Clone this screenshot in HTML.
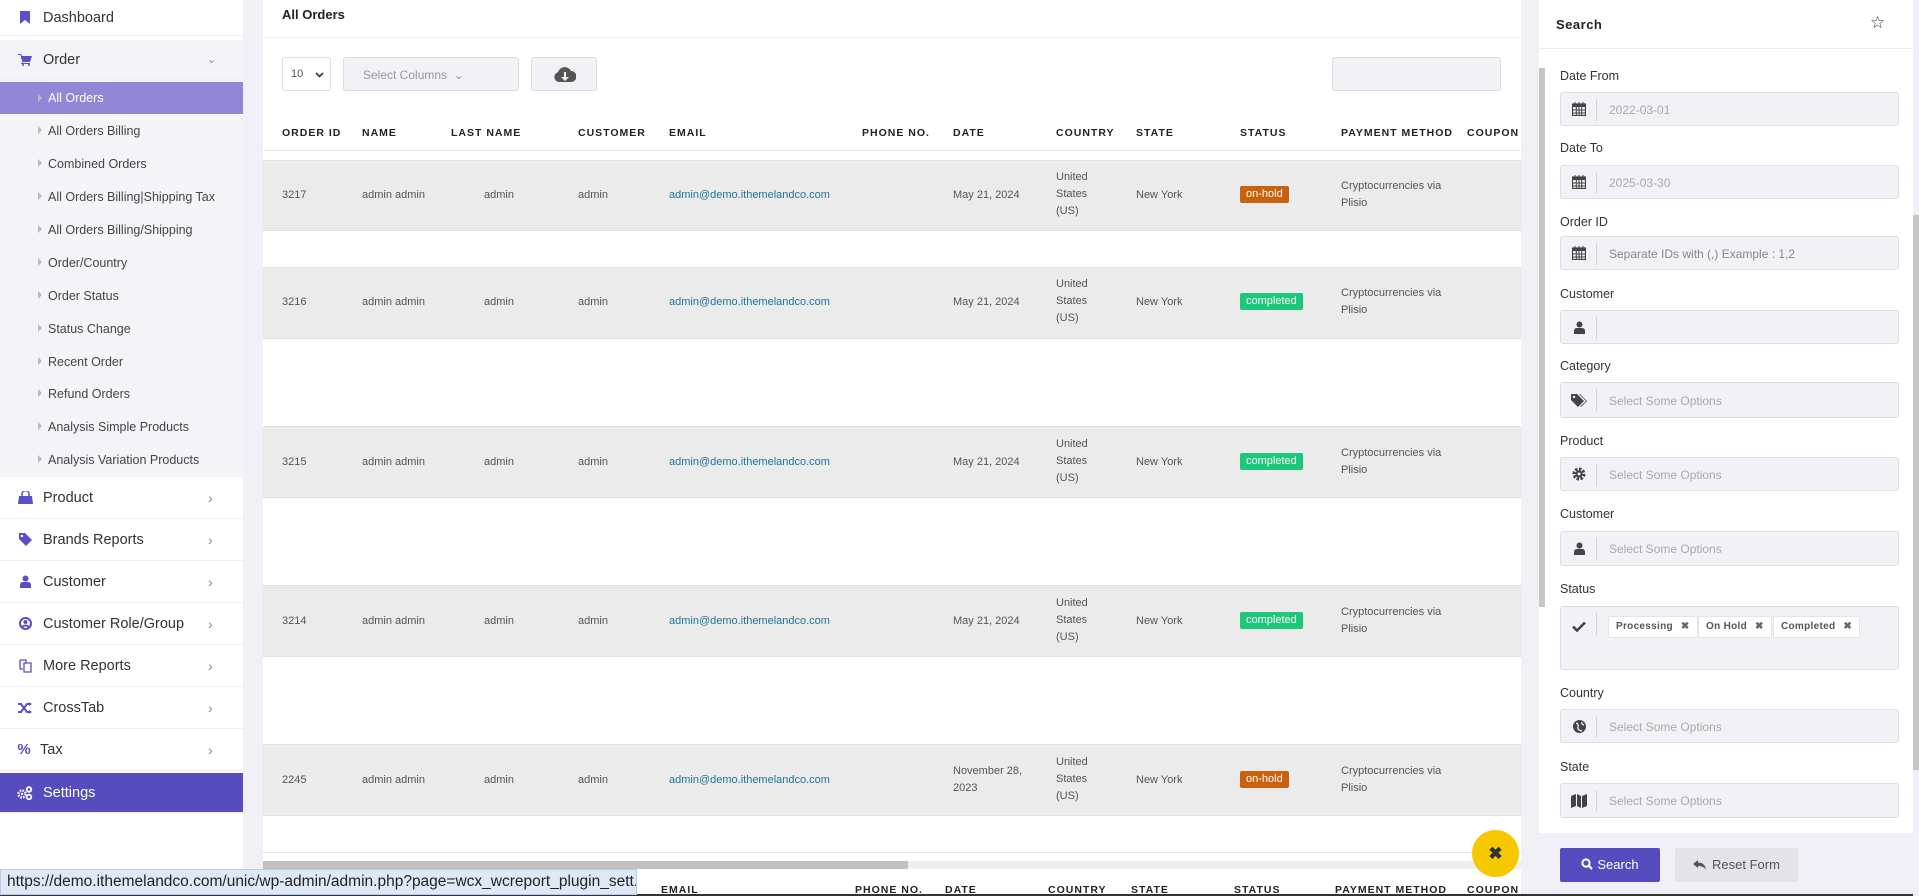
<!DOCTYPE html>
<html><head><meta charset="utf-8">
<style>
*{box-sizing:border-box;margin:0;padding:0}
body{width:1919px;height:896px;overflow:hidden;background:#f0f0f6;font-family:"Liberation Sans",Arial,sans-serif;position:relative;color:#333}
.a{position:absolute}
.side{left:0;top:0;width:243px;height:896px;background:#fff}
.mi{position:absolute;left:0;width:243px;height:42px;background:#fff;border-bottom:1px solid #f0f0f4;font-size:14.5px;color:#333;display:flex;align-items:center}
.mi .ic{width:16px;height:14px;margin-left:17px;margin-right:10px;color:#5a4fc4;font-size:14px;display:flex;align-items:center;justify-content:center}
.mi .ch{position:absolute;left:208px;color:#888;font-size:14px}
.sub{position:absolute;left:0;width:243px;height:33px;font-size:12.5px;color:#444;display:flex;align-items:center;padding-left:48px}
.sub:before{content:"";position:absolute;left:38px;top:12px;border-left:4px solid #bbb;border-top:4px solid transparent;border-bottom:4px solid transparent}
.main{left:263px;top:0;width:1258px;height:869px;background:#fff}
.th{position:absolute;font-size:10.5px;font-weight:bold;letter-spacing:1px;color:#222}
.row{position:absolute;left:263px;width:1258px;background:#ebebeb;border-top:1px solid #e2e2e2;border-bottom:1px solid #e2e2e2}
.td{position:absolute;font-size:11px;color:#555;line-height:17px}
.em{color:#21759b}
.badge{position:absolute;font-size:11px;color:#fff;border-radius:2px;padding:1px 6px;line-height:15px}
.lbl{position:absolute;left:1560px;font-size:12.5px;color:#333}
.inp{position:absolute;left:1560px;width:339px;height:34px;background:#f1f1f6;border:1px solid #dedee6;border-radius:3px}
.inp .ic{position:absolute;left:0;top:0;width:36px;height:100%;display:flex;align-items:center;justify-content:center;color:#444;font-size:14px}
.inp .ic:after{content:"";position:absolute;right:0;top:6px;height:22px;border-right:1px solid #d4d4dc}
.inp .ph{position:absolute;left:48px;top:10px;font-size:12px;color:#aaa}
.tag{position:absolute;top:9px;height:22px;background:#fff;border:1px solid #e4e4e8;border-radius:2px;font-size:10px;font-weight:bold;color:#555;padding:4px 7px;letter-spacing:.3px}
.tag b{margin-left:8px;color:#666}
</style></head><body>
<svg width="0" height="0" style="position:absolute"><defs>
<symbol id="cal" viewBox="0 0 14 14"><rect x="0.5" y="2" width="13" height="11.5" fill="none" stroke="#444" stroke-width="1.2"/><rect x="0.5" y="2" width="13" height="3" fill="#444"/><path d="M3 0v3M7 0v3M11 0v3M0 8h14M0 11h14M4.3 5v9M7 5v9M9.7 5v9" stroke="#444" stroke-width="1"/></symbol>
</defs></svg>

<div class="a side"></div>
<div class="mi" style="top:0;height:36px"><span class="ic"><svg width="10" height="13" viewBox="0 0 10 13"><path d="M0 0h10v13L5 9 0 13z" fill="#5a4fc4"/></svg></span>Dashboard</div>
<div class="mi" style="top:40px;height:40px;background:#f4f4f8"><span class="ic"><svg width="14" height="12" viewBox="0 0 14 12"><path d="M0 0h3l1 2h10l-2 6H5l-.5 1H12v1H3l1.3-2.5L2.3 1H0z" fill="#5a4fc4"/><circle cx="5" cy="11" r="1" fill="#5a4fc4"/><circle cx="11" cy="11" r="1" fill="#5a4fc4"/></svg></span>Order<span class="ch" style="left:207px;font-size:11px">&#8964;</span></div>
<div class="a" style="left:0;top:80px;width:243px;height:397px;background:#f4f4f8"></div>
<div class="sub" style="top:82px;height:32px;background:#9088d6;color:#fff">All Orders</div>
<div class="sub" style="top:114px">All Orders Billing</div>
<div class="sub" style="top:147px">Combined Orders</div>
<div class="sub" style="top:180px">All Orders Billing|Shipping Tax</div>
<div class="sub" style="top:213px">All Orders Billing/Shipping</div>
<div class="sub" style="top:246px">Order/Country</div>
<div class="sub" style="top:279px">Order Status</div>
<div class="sub" style="top:312px">Status Change</div>
<div class="sub" style="top:345px">Recent Order</div>
<div class="sub" style="top:377px">Refund Orders</div>
<div class="sub" style="top:410px">Analysis Simple Products</div>
<div class="sub" style="top:443px">Analysis Variation Products</div>
<div class="mi" style="top:477px"><span class="ic"><svg width="15" height="13" viewBox="0 0 15 13"><path d="M4 5V3a3.5 3.5 0 0 1 7 0v2" stroke="#5a4fc4" stroke-width="1.5" fill="none"/><path d="M1 5h13l1 8H0z" fill="#5a4fc4"/></svg></span>Product<span class="ch">&#8250;</span></div>
<div class="mi" style="top:519px"><span class="ic"><svg width="13" height="13" viewBox="0 0 13 13"><path d="M0 0h6l7 7-6 6-7-7z" fill="#5a4fc4"/><circle cx="3" cy="3" r="1.2" fill="#fff"/></svg></span>Brands Reports<span class="ch">&#8250;</span></div>
<div class="mi" style="top:561px"><span class="ic"><svg width="11" height="13" viewBox="0 0 11 13"><circle cx="5.5" cy="3.5" r="3" fill="#5a4fc4"/><path d="M0 13v-3q0-3 3-3h5q3 0 3 3v3z" fill="#5a4fc4"/></svg></span>Customer<span class="ch">&#8250;</span></div>
<div class="mi" style="top:603px"><span class="ic"><svg width="13" height="13" viewBox="0 0 13 13"><circle cx="6.5" cy="6.5" r="5.5" stroke="#5a4fc4" stroke-width="2" fill="none"/><circle cx="6.5" cy="5" r="2" fill="#5a4fc4"/><path d="M3 10q3.5-3 7 0" stroke="#5a4fc4" stroke-width="2" fill="none"/></svg></span>Customer Role/Group<span class="ch">&#8250;</span></div>
<div class="mi" style="top:645px"><span class="ic"><svg width="13" height="14" viewBox="0 0 13 14"><path d="M1 1h6v3M1 1v9h3M5 4h7v9H5z" stroke="#5a4fc4" stroke-width="1.3" fill="none"/></svg></span>More Reports<span class="ch">&#8250;</span></div>
<div class="mi" style="top:687px"><span class="ic"><svg width="14" height="12" viewBox="0 0 14 12"><path d="M0 2h3l6 8h3M0 10h3l6-8h3" stroke="#5a4fc4" stroke-width="2" fill="none"/><path d="M11 0l3 2-3 2zM11 8l3 2-3 2z" fill="#5a4fc4"/></svg></span>CrossTab<span class="ch">&#8250;</span></div>
<div class="mi" style="top:729px"><span class="ic" style="font-weight:bold;font-size:15px;margin-left:16px;margin-right:8px">%</span>Tax<span class="ch">&#8250;</span></div>
<div class="mi" style="top:773px;height:40px;background:#564bbf;color:#fff"><span class="ic"><svg width="16" height="14" viewBox="0 0 16 14"><circle cx="5" cy="8" r="3.5" stroke="#fff" stroke-width="2.4" stroke-dasharray="1.6 1.2" fill="none"/><circle cx="5" cy="8" r="1.2" fill="#fff"/><circle cx="12" cy="3.5" r="2.3" stroke="#fff" stroke-width="1.8" fill="none"/><circle cx="12" cy="11" r="2.3" stroke="#fff" stroke-width="1.8" fill="none"/></svg></span>Settings</div>

<div class="a main"></div>
<div class="a" style="left:282px;top:7px;font-size:13px;font-weight:bold;color:#222">All Orders</div>
<div class="a" style="left:263px;top:37px;width:1258px;border-top:1px solid #efeff3"></div>
<div class="a" style="left:282px;top:57px;width:49px;height:34px;border:1px solid #ddd;border-radius:3px;font-size:11px;color:#555;padding:10px 8px;white-space:nowrap">10<svg style="position:absolute;left:32px;top:14px" width="9" height="6" viewBox="0 0 9 6"><path d="M1 1l3.5 3.5L8 1" stroke="#333" stroke-width="1.6" fill="none"/></svg></div>
<div class="a" style="left:343px;top:57px;width:176px;height:34px;background:#f1f1f6;border:1px solid #ddd;border-radius:3px;font-size:12px;color:#999;padding:10px 19px">Select Columns &nbsp;&#8964;</div>
<div class="a" style="left:531px;top:57px;width:66px;height:34px;background:#f1f1f6;border:1px solid #ddd;border-radius:3px"><svg style="position:absolute;left:22px;top:9px" width="22" height="16" viewBox="0 0 22 16"><path d="M5 15a5 5 0 0 1-1-9.8A7 7 0 0 1 17 4a5.5 5.5 0 0 1 0 11z" fill="#555"/><path d="M10 5h2v5h3l-4 4-4-4h3z" fill="#f1f1f6"/></svg></div>
<div class="a" style="left:1332px;top:57px;width:169px;height:34px;background:#f1f1f6;border:1px solid #ddd;border-radius:3px"></div>

<div class="th" style="left:282px;top:127px">ORDER ID</div>
<div class="th" style="left:362px;top:127px">NAME</div>
<div class="th" style="left:451px;top:127px">LAST NAME</div>
<div class="th" style="left:578px;top:127px">CUSTOMER</div>
<div class="th" style="left:669px;top:127px">EMAIL</div>
<div class="th" style="left:862px;top:127px">PHONE NO.</div>
<div class="th" style="left:953px;top:127px">DATE</div>
<div class="th" style="left:1056px;top:127px">COUNTRY</div>
<div class="th" style="left:1136px;top:127px">STATE</div>
<div class="th" style="left:1240px;top:127px">STATUS</div>
<div class="th" style="left:1341px;top:127px">PAYMENT METHOD</div>
<div class="th" style="left:1467px;top:127px">COUPON</div>
<div class="a" style="left:263px;top:150px;width:1258px;border-top:1px solid #e6e6ea"></div>

<div class="row" style="top:160px;height:71px"></div>
<div class="row" style="top:267px;height:72px"></div>
<div class="row" style="top:426px;height:72px"></div>
<div class="row" style="top:585px;height:72px"></div>
<div class="row" style="top:744px;height:72px"></div>

<div class="td" style="left:282px;top:187px">3217</div><div class="td" style="left:362px;top:187px">admin admin</div><div class="td" style="left:484px;top:187px">admin</div><div class="td" style="left:578px;top:187px">admin</div><div class="td em" style="left:669px;top:187px">admin@demo.ithemelandco.com</div><div class="td" style="left:953px;top:187px">May 21, 2024</div><div class="td" style="left:1056px;top:169px">United<br>States<br>(US)</div><div class="td" style="left:1136px;top:187px">New York</div><div class="badge" style="left:1240px;top:186px;background:#c8620f">on-hold</div><div class="td" style="left:1341px;top:178px">Cryptocurrencies via<br>Plisio</div>

<div class="td" style="left:282px;top:294px">3216</div><div class="td" style="left:362px;top:294px">admin admin</div><div class="td" style="left:484px;top:294px">admin</div><div class="td" style="left:578px;top:294px">admin</div><div class="td em" style="left:669px;top:294px">admin@demo.ithemelandco.com</div><div class="td" style="left:953px;top:294px">May 21, 2024</div><div class="td" style="left:1056px;top:276px">United<br>States<br>(US)</div><div class="td" style="left:1136px;top:294px">New York</div><div class="badge" style="left:1240px;top:293px;background:#1cc67a">completed</div><div class="td" style="left:1341px;top:285px">Cryptocurrencies via<br>Plisio</div>

<div class="td" style="left:282px;top:454px">3215</div><div class="td" style="left:362px;top:454px">admin admin</div><div class="td" style="left:484px;top:454px">admin</div><div class="td" style="left:578px;top:454px">admin</div><div class="td em" style="left:669px;top:454px">admin@demo.ithemelandco.com</div><div class="td" style="left:953px;top:454px">May 21, 2024</div><div class="td" style="left:1056px;top:436px">United<br>States<br>(US)</div><div class="td" style="left:1136px;top:454px">New York</div><div class="badge" style="left:1240px;top:453px;background:#1cc67a">completed</div><div class="td" style="left:1341px;top:445px">Cryptocurrencies via<br>Plisio</div>

<div class="td" style="left:282px;top:613px">3214</div><div class="td" style="left:362px;top:613px">admin admin</div><div class="td" style="left:484px;top:613px">admin</div><div class="td" style="left:578px;top:613px">admin</div><div class="td em" style="left:669px;top:613px">admin@demo.ithemelandco.com</div><div class="td" style="left:953px;top:613px">May 21, 2024</div><div class="td" style="left:1056px;top:595px">United<br>States<br>(US)</div><div class="td" style="left:1136px;top:613px">New York</div><div class="badge" style="left:1240px;top:612px;background:#1cc67a">completed</div><div class="td" style="left:1341px;top:604px">Cryptocurrencies via<br>Plisio</div>

<div class="td" style="left:282px;top:772px">2245</div><div class="td" style="left:362px;top:772px">admin admin</div><div class="td" style="left:484px;top:772px">admin</div><div class="td" style="left:578px;top:772px">admin</div><div class="td em" style="left:669px;top:772px">admin@demo.ithemelandco.com</div><div class="td" style="left:953px;top:763px">November 28,<br>2023</div><div class="td" style="left:1056px;top:754px">United<br>States<br>(US)</div><div class="td" style="left:1136px;top:772px">New York</div><div class="badge" style="left:1240px;top:771px;background:#c8620f">on-hold</div><div class="td" style="left:1341px;top:763px">Cryptocurrencies via<br>Plisio</div>

<div class="a" style="left:263px;top:852px;width:1258px;border-top:1px solid #e2e2e6"></div>
<div class="a" style="left:263px;top:861px;width:1258px;height:8px;background:#f0f0f0"></div>
<div class="a" style="left:263px;top:861px;width:645px;height:8px;background:#c1c1c1"></div>
<div class="a" style="left:263px;top:869px;width:1258px;height:27px;background:#fff"></div>
<div class="th" style="left:661px;top:884px">EMAIL</div>
<div class="th" style="left:855px;top:884px">PHONE NO.</div>
<div class="th" style="left:945px;top:884px">DATE</div>
<div class="th" style="left:1048px;top:884px">COUNTRY</div>
<div class="th" style="left:1131px;top:884px">STATE</div>
<div class="th" style="left:1234px;top:884px">STATUS</div>
<div class="th" style="left:1335px;top:884px">PAYMENT METHOD</div>
<div class="th" style="left:1467px;top:884px;width:54px;overflow:hidden;white-space:nowrap">COUPON C</div>
<div class="a" style="left:0;top:894px;width:1919px;height:2px;background:#333"></div>

<div class="a" style="left:0;top:869px;width:637px;height:26px;background:#dfe8f6;border:1px solid #b9cbe6;font-size:15.5px;color:#222;padding:3px 6px;white-space:nowrap;overflow:hidden">https://demo.ithemelandco.com/unic/wp-admin/admin.php?page=wcx_wcreport_plugin_sett...</div>

<div class="a" style="left:1472px;top:830px;width:47px;height:47px;border-radius:50%;background:#f5c800;color:#333;font-size:17px;font-weight:bold;text-align:center;line-height:47px">&#10006;</div>

<div class="a" style="left:1539px;top:0;width:374px;height:833px;background:#fff"></div>
<div class="a" style="left:1556px;top:17px;font-size:13px;font-weight:bold;color:#222;letter-spacing:.5px">Search</div>
<div class="a" style="left:1870px;top:13px;font-size:17px;color:#333">&#9734;</div>
<div class="a" style="left:1539px;top:48px;width:374px;border-top:1px solid #ececf0"></div>
<div class="a" style="left:1539px;top:68px;width:6px;height:539px;background:#c6c6c6"></div>
<div class="a" style="left:1913px;top:0;width:6px;height:896px;background:#f0f0f6"></div>
<div class="a" style="left:1913px;top:215px;width:6px;height:555px;background:#c6c6c6"></div>

<div class="lbl" style="top:69px">Date From</div>
<div class="inp" style="top:92px"><span class="ic"><svg width="14" height="14"><use href="#cal"/></svg></span><span class="ph">2022-03-01</span></div>
<div class="lbl" style="top:141px">Date To</div>
<div class="inp" style="top:165px"><span class="ic"><svg width="14" height="14"><use href="#cal"/></svg></span><span class="ph">2025-03-30</span></div>
<div class="lbl" style="top:215px">Order ID</div>
<div class="inp" style="top:236px"><span class="ic"><svg width="14" height="14"><use href="#cal"/></svg></span><span class="ph" style="color:#888">Separate IDs with (,) Example : 1,2</span></div>
<div class="lbl" style="top:287px">Customer</div>
<div class="inp" style="top:310px"><span class="ic"><svg width="11" height="13" viewBox="0 0 11 13"><circle cx="5.5" cy="3.5" r="3" fill="#444"/><path d="M0 13v-3q0-3 3-3h5q3 0 3 3v3z" fill="#444"/></svg></span></div>
<div class="lbl" style="top:359px">Category</div>
<div class="inp" style="top:382px;height:36px"><span class="ic"><svg width="16" height="13" viewBox="0 0 16 13"><path d="M0 0h6l7 7-6 6-7-7z" fill="#444"/><path d="M8 0h1l7 7-6 6-.6-.6L15 7z" fill="#444"/><circle cx="3" cy="3" r="1.2" fill="#f1f1f6"/></svg></span><span class="ph" style="top:11px">Select Some Options</span></div>
<div class="lbl" style="top:434px">Product</div>
<div class="inp" style="top:457px"><span class="ic"><svg width="14" height="14" viewBox="0 0 14 14"><circle cx="7" cy="7" r="4.5" stroke="#444" stroke-width="4" stroke-dasharray="2.2 1.3" fill="none"/><circle cx="7" cy="7" r="3.5" fill="#444"/><circle cx="7" cy="7" r="1.5" fill="#f1f1f6"/></svg></span><span class="ph">Select Some Options</span></div>
<div class="lbl" style="top:507px">Customer</div>
<div class="inp" style="top:531px;height:35px"><span class="ic"><svg width="11" height="13" viewBox="0 0 11 13"><circle cx="5.5" cy="3.5" r="3" fill="#444"/><path d="M0 13v-3q0-3 3-3h5q3 0 3 3v3z" fill="#444"/></svg></span><span class="ph">Select Some Options</span></div>
<div class="lbl" style="top:582px">Status</div>
<div class="inp" style="top:606px;height:64px"><span class="ic" style="height:38px"><svg width="14" height="11" viewBox="0 0 14 11"><path d="M1 5.5l4 4L13 1.5" stroke="#444" stroke-width="2.6" fill="none"/></svg></span>
<span class="tag" style="left:47px">Processing<b>&#10006;</b></span>
<span class="tag" style="left:137px">On Hold<b>&#10006;</b></span>
<span class="tag" style="left:212px">Completed<b>&#10006;</b></span></div>
<div class="lbl" style="top:686px">Country</div>
<div class="inp" style="top:709px"><span class="ic"><svg width="13" height="13" viewBox="0 0 13 13"><circle cx="6.5" cy="6.5" r="6.5" fill="#444"/><path d="M3 3q3 1 2 4t4 4M9 2q-1 2 2 3" stroke="#f1f1f6" stroke-width="1.3" fill="none"/></svg></span><span class="ph">Select Some Options</span></div>
<div class="lbl" style="top:760px">State</div>
<div class="inp" style="top:783px;height:35px"><span class="ic"><svg width="16" height="14" viewBox="0 0 16 14"><path d="M0 2l5-2v12l-5 2zM6 0l4 2v12l-4-2zM11 2l5-2v12l-5 2z" fill="#444"/></svg></span><span class="ph">Select Some Options</span></div>

<div class="a" style="left:1560px;top:848px;width:100px;height:34px;background:#564bbf;border-radius:2px;color:#fff;font-size:13px;text-align:center;line-height:34px"><svg width="12" height="12" viewBox="0 0 12 12" style="vertical-align:-1px;margin-right:4px"><circle cx="5" cy="5" r="3.6" stroke="#fff" stroke-width="2" fill="none"/><path d="M7.5 7.5L11 11" stroke="#fff" stroke-width="2.2"/></svg>Search</div>
<div class="a" style="left:1675px;top:848px;width:123px;height:34px;background:#e4e4e8;border-radius:2px;color:#555;font-size:13px;text-align:center;line-height:34px"><svg width="13" height="10" viewBox="0 0 13 10" style="margin-right:6px;vertical-align:-1px"><path d="M0 4l5-4v2.5q7 0 8 7.5-2-4-8-4V8z" fill="#555"/></svg>Reset Form</div>
</body></html>
